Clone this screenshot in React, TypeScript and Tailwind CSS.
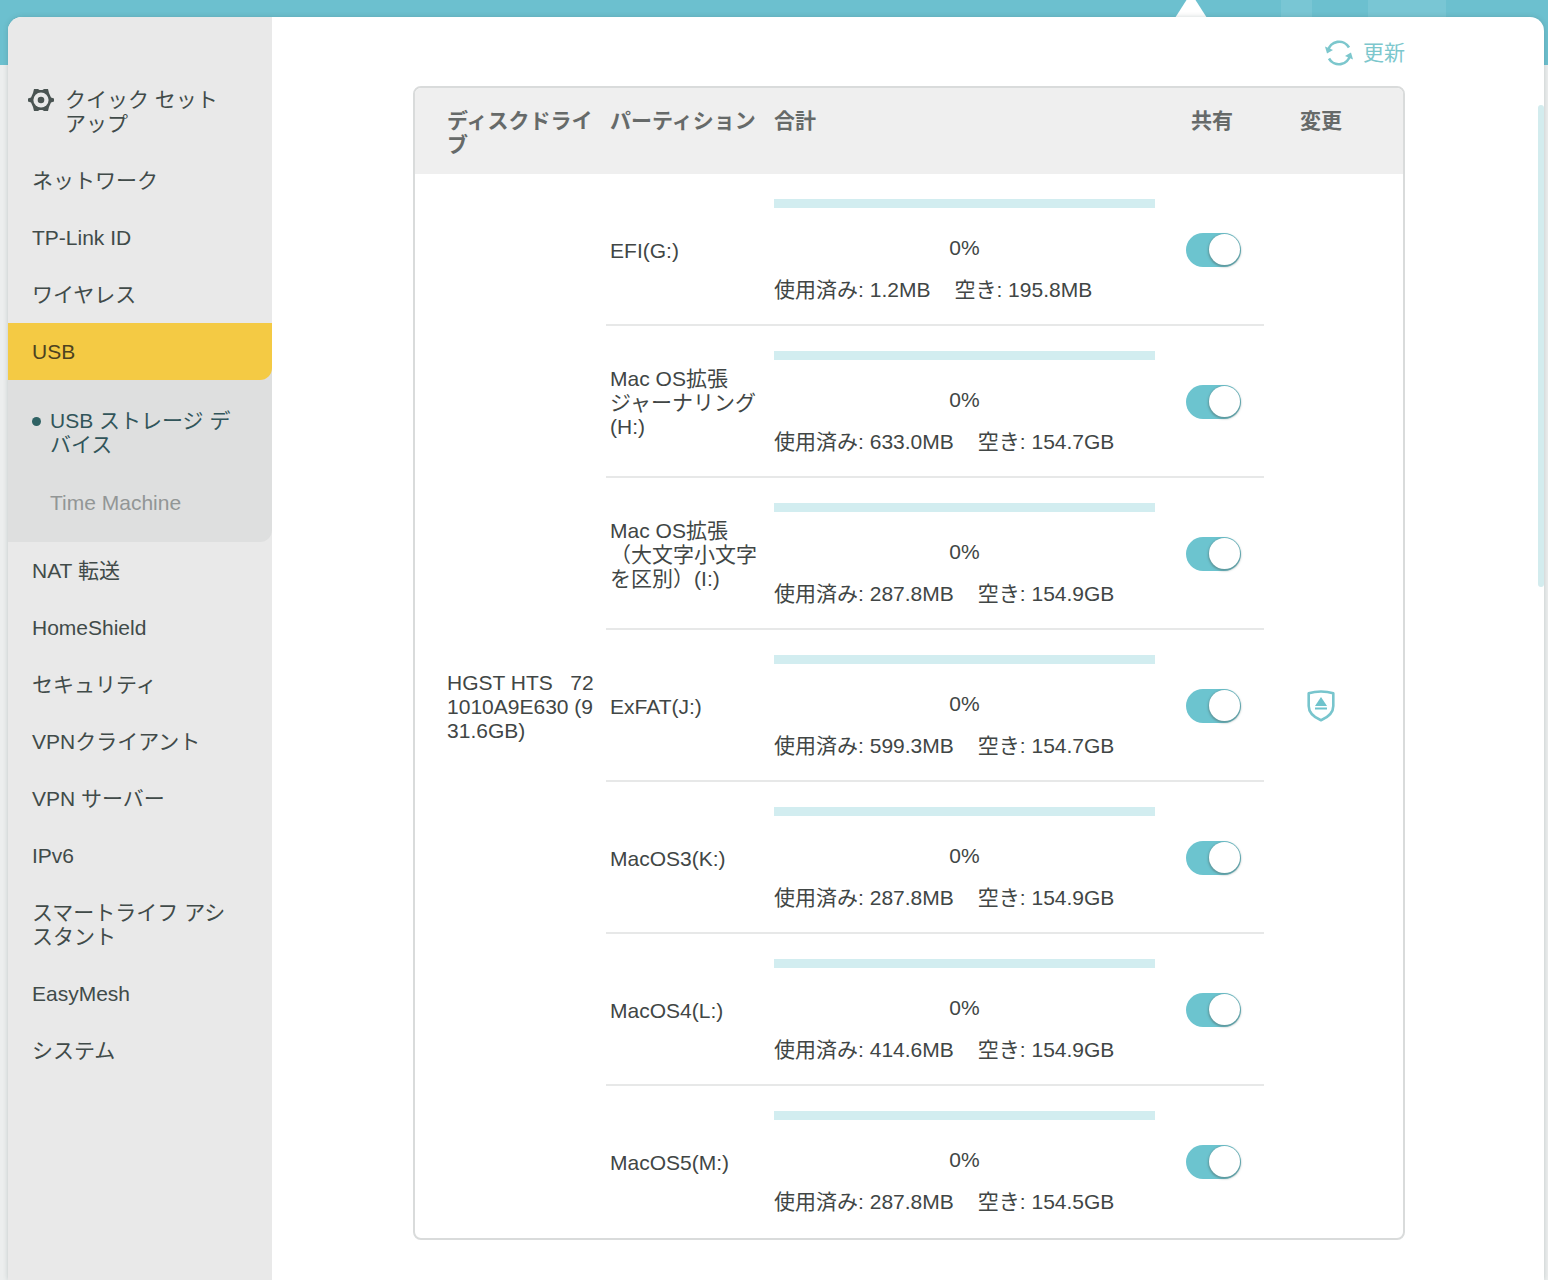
import { useState } from 'react'

type Partition = { name: string; used: string; free: string }

const partitions: Partition[] = [
  { name: 'EFI(G:)', used: '1.2MB', free: '195.8MB' },
  { name: 'Mac OS拡張\nジャーナリング\n(H:)', used: '633.0MB', free: '154.7GB' },
  { name: 'Mac OS拡張\n（大文字小文字\nを区別）(I:)', used: '287.8MB', free: '154.9GB' },
  { name: 'ExFAT(J:)', used: '599.3MB', free: '154.7GB' },
  { name: 'MacOS3(K:)', used: '287.8MB', free: '154.9GB' },
  { name: 'MacOS4(L:)', used: '414.6MB', free: '154.9GB' },
  { name: 'MacOS5(M:)', used: '287.8MB', free: '154.5GB' },
]

const topItems = ['ネットワーク', 'TP-Link ID', 'ワイヤレス']
const bottomItems = [
  'NAT 転送',
  'HomeShield',
  'セキュリティ',
  'VPNクライアント',
  'VPN サーバー',
  'IPv6',
  'スマートライフ アシスタント',
  'EasyMesh',
  'システム',
]

function GearIcon() {
  return (
    <svg viewBox="0 0 26 24" className="h-6 w-[26px] shrink-0" aria-hidden="true">
      <path
        d="M6 1h4l1.500 1h3L16 1h4l1 4 2 4.500 3 1v3l-3 1-2 4.500-1 4h-4l-1.500-1h-3L10 23H6l-1-4-2-4.500-3-1v-3l3-1L5 5z"
        fill="#4a5452"
      />
      <circle cx="13" cy="12" r="7.600" fill="#e9e9e9" />
      <circle cx="13" cy="12" r="3.300" fill="#4a5452" />
    </svg>
  )
}

function RefreshIcon() {
  return (
    <svg viewBox="0 0 28 26" className="h-[26px] w-7" fill="none" aria-hidden="true">
      <g stroke="#7cc7cd" strokeWidth="2.600">
        <path d="M3 11A11.300 11.300 0 0 1 24 7.500" />
        <path d="M25 15A11.300 11.300 0 0 1 4 18.500" />
      </g>
      <path d="M0 6.500l2 7 6-3.500z" fill="#7cc7cd" />
      <path d="M28 19.500l-2-7-6 3.500z" fill="#7cc7cd" />
    </svg>
  )
}

function EjectIcon() {
  return (
    <svg viewBox="0 0 28 32" className="h-8 w-7" fill="none" aria-hidden="true">
      <path
        d="M14 1.500c4 0 8.500.6 12.300 1.800V16c0 7-5.800 11.500-12.300 14.300C7.500 27.500 1.700 23 1.700 16V3.300C5.500 2.100 10 1.500 14 1.500z"
        stroke="#78c5cd"
        strokeWidth="2.600"
        strokeLinejoin="round"
      />
      <path d="M14 7l6 9H8z" fill="#6fc3cc" />
      <path d="M8 18.500h12" stroke="#6fc3cc" strokeWidth="2" />
    </svg>
  )
}

function NavItem({ label }: { label: string }) {
  return (
    <li>
      <a href="#" className="block pt-[17px] pr-8 pb-4 pl-6">
        {label}
      </a>
    </li>
  )
}

function Sidebar() {
  return (
    <nav className="w-[264px] shrink-0 bg-[#e9e9e9] pt-[54px] text-[#414b49]">
      <ul>
        <li>
          <a href="#" className="flex gap-[11px] pt-[17px] pr-10 pb-4 pl-5">
            <GearIcon />
            <span>クイック セットアップ</span>
          </a>
        </li>
        {topItems.map((label) => (
          <NavItem key={label} label={label} />
        ))}
        <li className="rounded-br-xl bg-[#dedfdf]">
          <a href="#" className="block rounded-br-xl bg-[#f4ca44] pt-[17px] pr-8 pb-4 pl-6 text-[#4d4220]">
            USB
          </a>
          <ul className="flex flex-col gap-[34px] pt-[29px] pr-7 pb-[27px] pl-6">
            <li>
              <a href="#" className="flex gap-[9px] text-[#31555a]">
                <span className="mt-2 h-[9px] w-[9px] shrink-0 rounded-full bg-[#2f6264]" />
                <span>USB ストレージ デバイス</span>
              </a>
            </li>
            <li>
              <a href="#" className="block pl-[18px] text-[#929696]">
                Time Machine
              </a>
            </li>
          </ul>
        </li>
        {bottomItems.map((label) => (
          <NavItem key={label} label={label} />
        ))}
      </ul>
    </nav>
  )
}

function Toggle({ label }: { label: string }) {
  const [on, setOn] = useState(true)
  return (
    <input
      type="checkbox"
      role="switch"
      aria-label={label}
      checked={on}
      onChange={() => setOn(!on)}
      className="block h-[34px] w-[55px] cursor-pointer appearance-none rounded-full bg-[#c9cccc] p-px before:block before:h-[31px] before:w-[31px] before:rounded-full before:bg-white before:shadow-[0_1px_2px_1px_rgba(80,110,110,0.5)] checked:bg-[#6cc4cf] checked:before:ml-[22px]"
    />
  )
}

function PartitionRow({ item, index }: { item: Partition; index: number }) {
  const last = index === partitions.length - 1
  const line = last ? 'border-b-2 border-transparent' : 'border-b-2 border-[#e7e8e8]'
  return (
    <tr>
      {index === 0 && (
        <td rowSpan={partitions.length} className="pt-0.5 pl-8 align-middle">
          <div className="w-[150px] break-all">HGST HTS&nbsp;&nbsp; 721010A9E630 (931.6GB)</div>
        </td>
      )}
      <td className={`pt-[3px] pl-1 whitespace-pre-line ${line}`}>{item.name}</td>
      <td className={`pt-[25px] pr-[9px] pb-[22px] pl-2 ${line}`}>
        <div role="progressbar" aria-valuenow={0} aria-label={item.name} className="h-[9px] bg-[#d2edf0]" />
        <div className="mt-7 text-center">0%</div>
        <div className="mt-[18px] flex gap-6 whitespace-nowrap">
          <span>使用済み: {item.used}</span>
          <span>空き: {item.free}</span>
        </div>
      </td>
      <td className={`pt-px pl-[22px] ${line}`}>
        <Toggle label={`共有 ${item.name}`} />
      </td>
      {index === 0 && (
        <td rowSpan={partitions.length} className="pl-[43px] align-middle">
          <button type="button" aria-label="取り外し" className="block">
            <EjectIcon />
          </button>
        </td>
      )}
    </tr>
  )
}

export default function App() {
  return (
    <div
      lang="ja"
      className="flex min-h-screen flex-col bg-[#eceeee] font-['Liberation_Sans','Noto_Sans_CJK_JP',sans-serif] text-[21px] leading-6 text-[#414645]"
    >
      <header className="relative h-[65px] bg-[#6cc0cf]">
        <div className="absolute top-0 right-[236px] h-[17px] w-[31px] bg-[#79c6d4]" />
        <div className="absolute top-0 right-[102px] h-[17px] w-[78px] bg-[#79c6d4]" />
        <svg viewBox="0 0 32 18" className="absolute top-0 right-[341px] h-[18px] w-8" aria-hidden="true">
          <path d="M0 18L11.500 0h9L32 18z" fill="#fff" />
        </svg>
      </header>

      <div className="relative -mt-12 mr-1 ml-2 flex grow overflow-hidden rounded-t-[14px] bg-white shadow-[0_0_5px_rgba(60,90,90,0.25)]">
        <Sidebar />
        <main className="min-w-0 grow pl-0.5">
          <div className="mx-auto w-[78.1%] pt-6 pb-10">
            <div className="mb-[21px] flex justify-end">
              <button type="button" className="flex h-6 items-center gap-[10px] text-[#7cc7cd]">
                <RefreshIcon />
                更新
              </button>
            </div>
            <div className="overflow-hidden rounded-lg border-2 border-[#d9dbdb]">
              <table className="w-full table-fixed border-separate border-spacing-0 text-left">
                <colgroup>
                  <col className="w-[191px]" />
                  <col className="w-[160px]" />
                  <col />
                  <col className="w-[100px]" />
                  <col className="w-[139px]" />
                </colgroup>
                <thead className="bg-[#efefef] align-top text-[#666a69]">
                  <tr>
                    <th scope="col" className="h-[86px] pt-[21px] pl-8">
                      <div className="w-[150px]">ディスクドライブ</div>
                    </th>
                    <th scope="col" className="pt-[21px] pl-1">
                      パーティション
                    </th>
                    <th scope="col" className="pt-[21px] pl-2">
                      合計
                    </th>
                    <th scope="col" className="pt-[21px] pr-1 text-center">
                      共有
                    </th>
                    <th scope="col" className="pt-[21px] pl-9">
                      変更
                    </th>
                  </tr>
                </thead>
                <tbody>
                  {partitions.map((item, index) => (
                    <PartitionRow key={item.name} item={item} index={index} />
                  ))}
                </tbody>
              </table>
            </div>
          </div>
        </main>
        <div className="absolute top-[88px] right-0 h-[482px] w-[6px] rounded-full bg-[#d3ecee]" />
      </div>
    </div>
  )
}
